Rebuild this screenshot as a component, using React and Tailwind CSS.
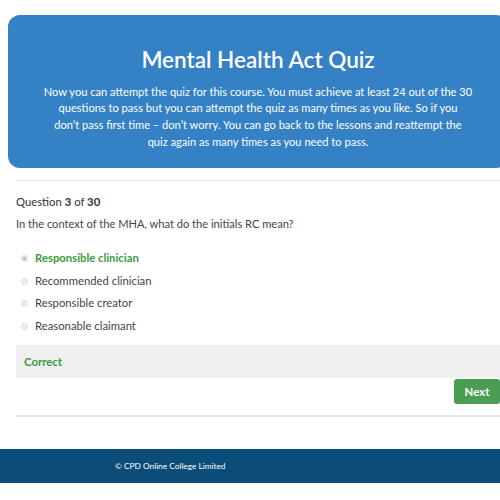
export default function App() {
  const options = [
    { label: "Responsible clinician", correct: true },
    { label: "Recommended clinician" },
    { label: "Responsible creator" },
    { label: "Reasonable claimant" },
  ];
  return (
    <div
      className="w-[500px] h-[500px] overflow-hidden bg-white"
      style={{ fontFamily: "Lato, 'Noto Sans', sans-serif" }}
    >
      <div className="w-[516px]">
        <div className="pt-[15px] px-2">
          <div className="bg-[#3481c5] rounded-[12px] h-[153px] flex flex-col items-center pt-[30px] text-white text-center">
            <h1 className="text-[22.5px] leading-[30px] font-semibold">Mental Health Act Quiz</h1>
            <p className="mt-[8.5px] text-[11.1px] leading-[16.7px] w-[460px]">
              Now you can attempt the quiz for this course. You must achieve at least 24 out of the 30
              <br />
              questions to pass but you can attempt the quiz as many times as you like. So if you
              <br />
              don’t pass first time – don’t worry. You can go back to the lessons and reattempt the
              <br />
              quiz again as many times as you need to pass.
            </p>
          </div>
        </div>
        <div className="px-4">
          <div className="mt-[12px] border-t border-[#e3e3e3]"></div>
          <div className="mt-[13px] text-[11.3px] leading-[16px] text-[#333]">
            Question <span className="font-bold">3</span> of <span className="font-bold">30</span>
          </div>
          <div className="mt-[6px] text-[11.1px] leading-[16px] text-[#444]">
            In the context of the MHA, what do the initials RC mean?
          </div>
          <div className="mt-[15px] flex flex-col">
            {options.map((o, i) => (
              <div key={i} className="flex items-center h-[22.7px]">
                <span className="ml-[5px] w-[7px] h-[7px] rounded-full bg-[#ececec] border border-[#dcdcdc] flex items-center justify-center">
                  {o.correct && <span className="w-[3px] h-[3px] rounded-full bg-[#b5b5b5]"></span>}
                </span>
                <span
                  className={
                    "ml-[7px] text-[11.3px] " +
                    (o.correct ? "text-[#3a9a3f] font-bold" : "text-[#444]")
                  }
                >
                  {o.label}
                </span>
              </div>
            ))}
          </div>
          <div className="mt-[7px] h-[33px] bg-[#f0f0f0] flex items-center px-2 text-[11.4px] font-bold text-[#3a9a3f]">
            Correct
          </div>
          <div className="flex justify-end">
            <button className="mt-px h-[25px] w-[46px] bg-[#4a9d52] rounded-[3px] text-white text-[11.4px] font-bold">
              Next
            </button>
          </div>
          <div className="mt-[11px] border-t-2 border-[#e6e6e6]"></div>
        </div>
        <div className="mt-[32px] h-[34px] bg-[#0c4c78] flex items-center pl-[115px] text-[8.3px] text-white">
          © CPD Online College Limited
        </div>
      </div>
    </div>
  );
}
